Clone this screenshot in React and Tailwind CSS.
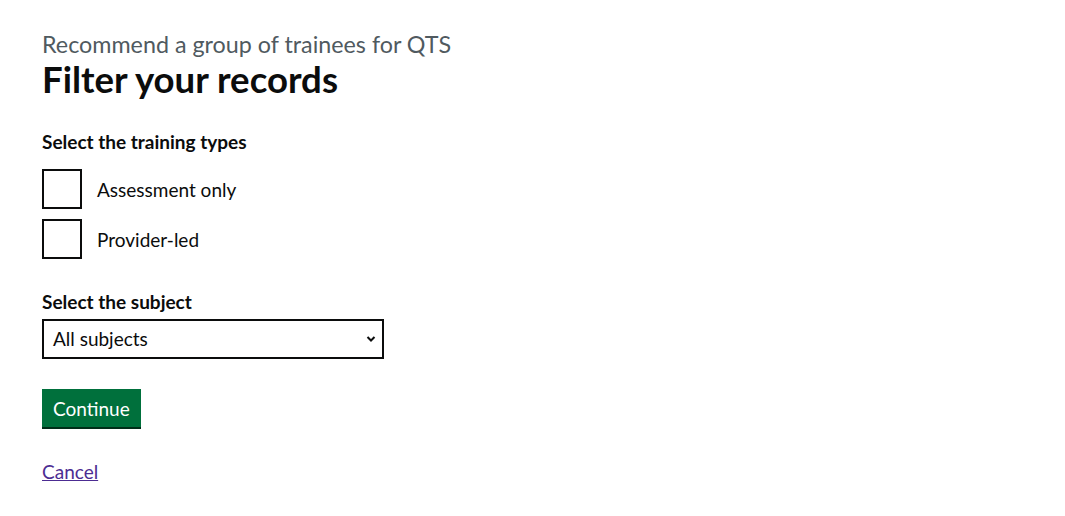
export default function App() {
  const font = { fontFamily: 'Lato, "Liberation Sans", Arial, sans-serif' };
  return (
    <div className="w-[1065px] h-[516px] bg-white text-[#0b0c0c]" style={font}>
      <div className="pl-[42px] pt-[30px]">
        <span className="block text-[23.3px] leading-[29px] text-[#505a5f]">Recommend a group of trainees for QTS</span>
        <h1 className="text-[36.6px] leading-[41px] font-bold mb-[29px]">Filter your records</h1>
        <fieldset>
          <legend className="text-[19px] leading-[25px] font-bold mb-[15px]">Select the training types</legend>
          <div className="flex flex-col gap-[10px]">
            {["Assessment only", "Provider-led"].map((l) => (
              <label key={l} className="flex items-center">
                <span className="w-[40px] h-[40px] border-2 border-[#0b0c0c] bg-white shrink-0" />
                <span className="ml-[15px] text-[19px] leading-[25px]">{l}</span>
              </label>
            ))}
          </div>
        </fieldset>
        <div className="mt-[30px]">
          <label className="block text-[19px] leading-[25px] font-bold mb-[5px]">Select the subject</label>
          <div className="relative w-[342px] h-[40px] border-2 border-[#0b0c0c] flex items-center pl-[9px]">
            <span className="text-[19px]">All subjects</span>
            <svg className="absolute right-[6px] top-[14px]" width="10" height="8" viewBox="0 0 10 8">
              <path d="M1.5 2 L5 5.5 L8.5 2" fill="none" stroke="#0b0c0c" strokeWidth="2" />
            </svg>
          </div>
        </div>
        <div className="mt-[30px]">
          <button className="bg-[#00703c] text-white text-[19px] leading-[19px] px-[11px] pt-[10px] pb-[9px] shadow-[0_2px_0_#002d18]">Continue</button>
        </div>
        <div className="mt-[32px]">
          <a href="#" className="text-[19px] leading-[25px] text-[#4c2c92] underline">Cancel</a>
        </div>
      </div>
    </div>
  );
}
